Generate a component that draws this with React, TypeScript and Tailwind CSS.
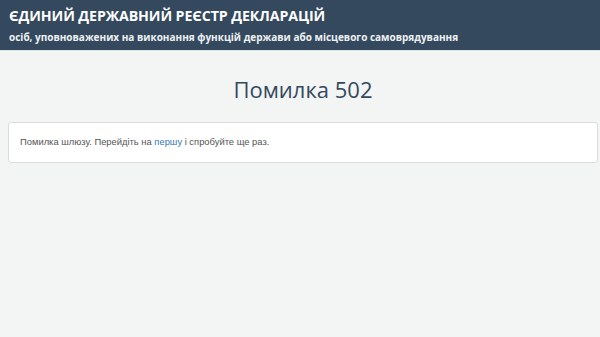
export default function App() {
  return (
    <div className="min-h-[337px] bg-[#f3f4f4]">
      <header className="h-[51px] bg-[#34495e] px-[9px] pt-[6px] border-b border-[#dfe3e6] text-white" style={{ fontFamily: '"Open Sans", sans-serif' }}>
        <h1 className="text-[14.2px] font-bold leading-[20px] tracking-[-0.1px]">ЄДИНИЙ ДЕРЖАВНИЙ РЕЄСТР ДЕКЛАРАЦІЙ</h1>
        <p className="text-[10px] font-bold leading-[15px] mt-[4px] text-[#eef1f3]">
          осіб, уповноважених на виконання функцій держави або місцевого самоврядування
        </p>
      </header>
      <main className="pl-[8px] pr-[2px]">
        <h2 className="text-center text-[22px] leading-[30px] pt-[23px] text-[#34495e]" style={{ fontFamily: '"Open Sans", sans-serif' }}>
          Помилка 502
        </h2>
        <div className="mt-[18px] h-[41px] bg-white border border-[#dcdcdc] rounded-[3px] px-[11px] flex items-center text-[9.4px] text-[#555]" style={{ fontFamily: '"Liberation Sans", Arial, sans-serif' }}>
          <span>
            Помилка шлюзу. Перейдіть на <a href="#" className="text-[#337ab7]">першу</a> і спробуйте ще раз.
          </span>
        </div>
      </main>
    </div>
  );
}
